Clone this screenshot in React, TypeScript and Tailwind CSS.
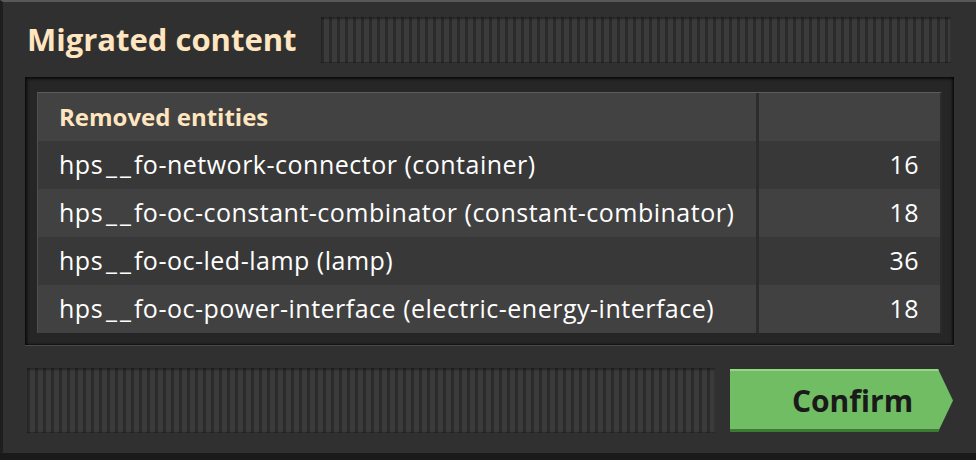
import React from "react";

const rows = [
  { name: "fo-network-connector (container)", count: 16 },
  { name: "fo-oc-constant-combinator (constant-combinator)", count: 18 },
  { name: "fo-oc-led-lamp (lamp)", count: 36 },
  { name: "fo-oc-power-interface (electric-energy-interface)", count: 18 },
];

const stripes =
  "bg-[repeating-linear-gradient(90deg,#2b2b2b_0px,#2b2b2b_3px,#3b3b3b_3px,#3b3b3b_8px)]";

const Handle = ({ className }: { className: string }) => (
  <div
    className={`${className} ${stripes} shadow-[inset_0_2px_2px_rgba(0,0,0,0.35),inset_0_-1px_1px_rgba(0,0,0,0.3)]`}
  />
);

const App = () => {
  return (
    <div
      className="w-[976px] h-[460px] bg-[#1b1a1a] overflow-hidden"
      style={{ fontFamily: '"Open Sans", "Noto Sans", sans-serif' }}
    >
      <div className="h-[453px] bg-[#313031] border-t-2 border-t-[#5a5959] border-l-[3px] border-l-[#1f1e1e] pl-[22px] pr-[22px] flex flex-col">
        {/* title bar */}
        <div className="flex items-start pt-[15px] h-[75px]">
          <h1 className="ml-[2px] mt-[2px] w-[294px] text-[31px] leading-[40px] font-bold text-[#ffe6c0]">
            Migrated content
          </h1>
          <Handle className="flex-1 h-[46px] mr-[3px]" />
        </div>

        {/* table */}
        <div className="h-[269px] bg-[#262626] pt-[15px] pb-[14px] px-[12px] shadow-[inset_2px_2px_3px_rgba(0,0,0,0.75),inset_-2px_-1px_2px_rgba(0,0,0,0.6)] border-b border-b-[#4a4949]">
          <div className="border-t border-t-[#5c5c5c] border-l border-l-[#505050] border-r-2 border-r-[#2b2b2b] text-[25px] tracking-[0.5px] text-white">
            <div className="flex h-[48px] bg-[#424242]">
              <div className="flex-1 flex items-center pl-[21px] font-bold text-[#ffe6c0] text-[24px] tracking-normal">
                Removed entities
              </div>
              <div className="w-[184px] border-l-[3px] border-l-[#2c2c2c]" />
            </div>
            {rows.map((r, i) => (
              <div
                key={r.name}
                className={`flex h-[48px] ${i % 2 === 0 ? "bg-[#383838]" : "bg-[#414141]"}`}
              >
                <div className="flex-1 flex items-center pl-[21px] whitespace-nowrap">
                  hps<span className="tracking-[3px] ml-[3px]">__</span>
                  {r.name}
                </div>
                <div className="w-[184px] border-l-[3px] border-l-[#2c2c2c] flex items-center justify-end pr-[21px]">
                  {r.count}
                </div>
              </div>
            ))}
          </div>
        </div>

        {/* footer */}
        <div className="flex items-center mt-[22px] h-[65px]">
          <Handle className="ml-[2px] w-[688px] h-[65px]" />
          <button className="ml-[15px] w-[223px] h-[63px] bg-[#70bd64] [clip-path:polygon(0_0,calc(100%_-_15px)_0,100%_50%,calc(100%_-_15px)_100%,0_100%)] shadow-[inset_0_2px_0_#93d886,inset_0_-3px_0_#3f7a35] flex items-center justify-center pl-[22px] text-[30px] font-bold text-[#1a1a1a]">
            Confirm
          </button>
        </div>
      </div>
    </div>
  );
};

export default App;
